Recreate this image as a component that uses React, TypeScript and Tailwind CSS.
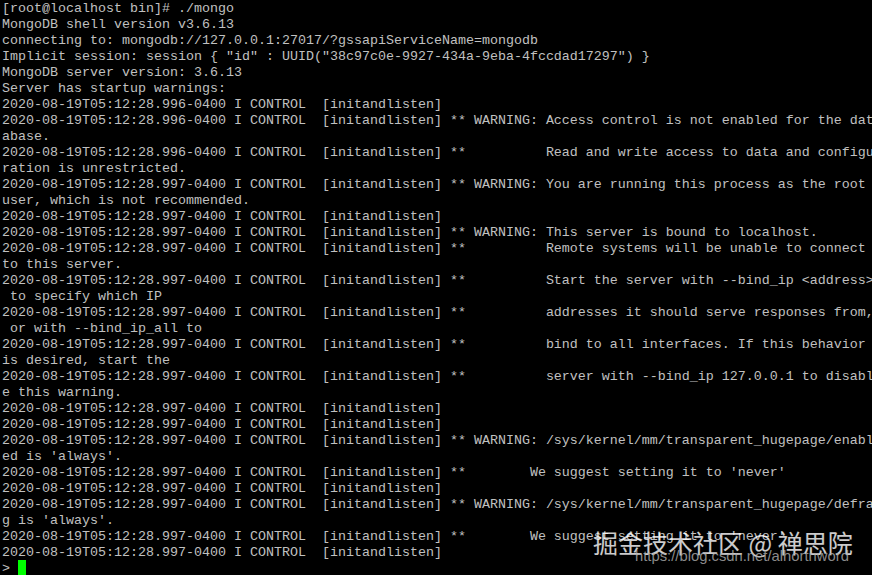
import React from "react";

const P = "2020-08-19T05:12:28.";
const C = "-0400 I CONTROL  [initandlisten]";
const a = (ms: string, rest = "") => P + ms + C + rest;

const lines: string[] = [
  "[root@localhost bin]# ./mongo",
  "MongoDB shell version v3.6.13",
  "connecting to: mongodb://127.0.0.1:27017/?gssapiServiceName=mongodb",
  'Implicit session: session { "id" : UUID("38c97c0e-9927-434a-9eba-4fccdad17297") }',
  "MongoDB server version: 3.6.13",
  "Server has startup warnings:",
  a("996"),
  a("996", " ** WARNING: Access control is not enabled for the dat"),
  "abase.",
  a("996", " **          Read and write access to data and configu"),
  "ration is unrestricted.",
  a("997", " ** WARNING: You are running this process as the root "),
  "user, which is not recommended.",
  a("997"),
  a("997", " ** WARNING: This server is bound to localhost."),
  a("997", " **          Remote systems will be unable to connect "),
  "to this server.",
  a("997", " **          Start the server with --bind_ip <address>"),
  " to specify which IP",
  a("997", " **          addresses it should serve responses from,"),
  " or with --bind_ip_all to",
  a("997", " **          bind to all interfaces. If this behavior "),
  "is desired, start the",
  a("997", " **          server with --bind_ip 127.0.0.1 to disabl"),
  "e this warning.",
  a("997"),
  a("997"),
  a("997", " ** WARNING: /sys/kernel/mm/transparent_hugepage/enabl"),
  "ed is 'always'.",
  a("997", " **        We suggest setting it to 'never'"),
  a("997"),
  a("997", " ** WARNING: /sys/kernel/mm/transparent_hugepage/defra"),
  "g is 'always'.",
  a("997", " **        We suggest setting it to 'never'"),
  a("997"),
];

export default function App() {
  return (
    <div className="relative w-[872px] h-[575px] overflow-hidden bg-black">
      <div
        className="pl-[2px] text-[13.333px] leading-[16px] text-[#c0c0c0]"
        style={{ fontFamily: '"Liberation Mono", "Courier New", monospace' }}
      >
        {lines.map((l, i) => (
          <div key={i} className="relative top-[1px] h-[16px] whitespace-pre">
            {l}
          </div>
        ))}
        <div className="flex h-[16px] items-stretch whitespace-pre">
          <span className="relative top-[1px]">{"> "}</span>
          <span className="w-[8px] bg-[#00ff00]" />
        </div>
      </div>
      <div
        className="absolute left-[593px] top-[525px] whitespace-nowrap text-[25px] leading-[34px] text-white/80"
        style={{ fontFamily: '"Noto Sans CJK SC", "Noto Sans", sans-serif' }}
      >
        掘金技术社区 @ 禅思院
      </div>
      <div
        className="absolute left-[635px] top-[546px] whitespace-nowrap text-[14.8px] leading-[20px] text-[#b0b0b0]/80"
        style={{ fontFamily: '"Liberation Sans", Arial, sans-serif' }}
      >
        https://blog.csdn.net/alhortnword
      </div>
    </div>
  );
}
